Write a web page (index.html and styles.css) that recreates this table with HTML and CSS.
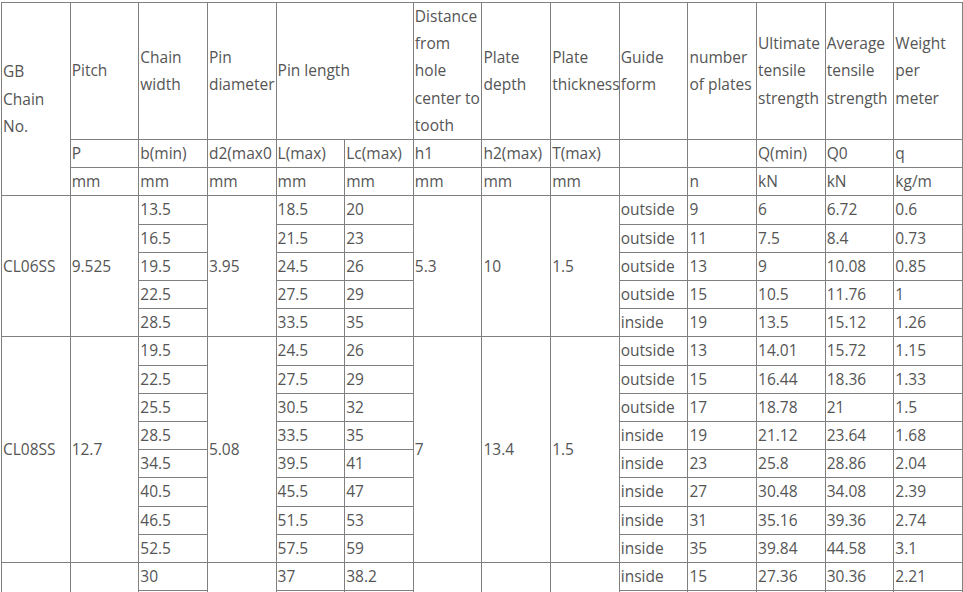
FILE: index.html
```html
<!DOCTYPE html>
<html>
<head>
<meta charset="utf-8">
<link rel="stylesheet" href="styles.css">
</head>
<body>
<table class="spec">
<tbody>
<tr>
<td rowspan="3">GB<br>Chain<br>No.</td>
<td>Pitch</td>
<td>Chain width</td>
<td>Pin diameter</td>
<td colspan="2">Pin length</td>
<td>Distance from hole center to tooth</td>
<td>Plate depth</td>
<td>Plate thickness</td>
<td>Guide form</td>
<td>number of plates</td>
<td>Ultimate tensile strength</td>
<td>Average tensile strength</td>
<td>Weight per meter</td>
</tr>
<tr>
<td>P</td><td>b(min)</td><td>d2(max0</td><td>L(max)</td><td>Lc(max)</td><td>h1</td><td>h2(max)</td><td>T(max)</td><td></td><td></td><td>Q(min)</td><td>Q0</td><td>q</td>
</tr>
<tr>
<td>mm</td><td>mm</td><td>mm</td><td>mm</td><td>mm</td><td>mm</td><td>mm</td><td>mm</td><td></td><td>n</td><td>kN</td><td>kN</td><td>kg/m</td>
</tr>
<tr>
<td rowspan="5">CL06SS</td><td rowspan="5">9.525</td><td>13.5</td><td rowspan="5">3.95</td><td>18.5</td><td>20</td><td rowspan="5">5.3</td><td rowspan="5">10</td><td rowspan="5">1.5</td><td>outside</td><td>9</td><td>6</td><td>6.72</td><td>0.6</td>
</tr>
<tr><td>16.5</td><td>21.5</td><td>23</td><td>outside</td><td>11</td><td>7.5</td><td>8.4</td><td>0.73</td></tr>
<tr><td>19.5</td><td>24.5</td><td>26</td><td>outside</td><td>13</td><td>9</td><td>10.08</td><td>0.85</td></tr>
<tr><td>22.5</td><td>27.5</td><td>29</td><td>outside</td><td>15</td><td>10.5</td><td>11.76</td><td>1</td></tr>
<tr><td>28.5</td><td>33.5</td><td>35</td><td>inside</td><td>19</td><td>13.5</td><td>15.12</td><td>1.26</td></tr>
<tr>
<td rowspan="8">CL08SS</td><td rowspan="8">12.7</td><td>19.5</td><td rowspan="8">5.08</td><td>24.5</td><td>26</td><td rowspan="8">7</td><td rowspan="8">13.4</td><td rowspan="8">1.5</td><td>outside</td><td>13</td><td>14.01</td><td>15.72</td><td>1.15</td>
</tr>
<tr><td>22.5</td><td>27.5</td><td>29</td><td>outside</td><td>15</td><td>16.44</td><td>18.36</td><td>1.33</td></tr>
<tr><td>25.5</td><td>30.5</td><td>32</td><td>outside</td><td>17</td><td>18.78</td><td>21</td><td>1.5</td></tr>
<tr><td>28.5</td><td>33.5</td><td>35</td><td>inside</td><td>19</td><td>21.12</td><td>23.64</td><td>1.68</td></tr>
<tr><td>34.5</td><td>39.5</td><td>41</td><td>inside</td><td>23</td><td>25.8</td><td>28.86</td><td>2.04</td></tr>
<tr><td>40.5</td><td>45.5</td><td>47</td><td>inside</td><td>27</td><td>30.48</td><td>34.08</td><td>2.39</td></tr>
<tr><td>46.5</td><td>51.5</td><td>53</td><td>inside</td><td>31</td><td>35.16</td><td>39.36</td><td>2.74</td></tr>
<tr><td>52.5</td><td>57.5</td><td>59</td><td>inside</td><td>35</td><td>39.84</td><td>44.58</td><td>3.1</td></tr>
<tr>
<td rowspan="2"></td><td rowspan="2"></td><td>30</td><td rowspan="2"></td><td>37</td><td>38.2</td><td rowspan="2"></td><td rowspan="2"></td><td rowspan="2"></td><td>inside</td><td>15</td><td>27.36</td><td>30.36</td><td>2.21</td>
</tr>
<tr><td>&nbsp;</td><td></td><td></td><td></td><td></td><td></td><td></td><td></td></tr>
</tbody>
</table>
</body>
</html>
```
FILE: styles.css
```css
html, body {
  margin: 0;
  padding: 0;
  background: #ffffff;
}
body {
  font-family: "Open Sans", "Liberation Sans", sans-serif;
  font-size: 15.5px;
  color: #555555;
}
.spec {
  border-collapse: collapse;
  table-layout: fixed;
  width: 962px;
  margin: 2px 0 0 1px;
}
.spec td {
  border: 1px solid #808080;
  padding: 0 0 0 1px;
  line-height: 27.2px;
  vertical-align: middle;
  text-align: left;
  white-space: normal;
  overflow: visible;
}
```
